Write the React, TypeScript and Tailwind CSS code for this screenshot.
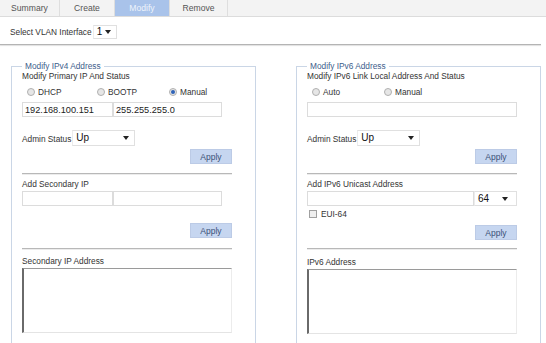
import type { ReactNode } from 'react';

const tabs = [
	{ label: 'Summary', w: 'w-[60px]', active: false },
	{ label: 'Create', w: 'w-[55px]', active: false },
	{ label: 'Modify', w: 'w-[55px]', active: true },
	{ label: 'Remove', w: 'w-[58px]', active: false },
];

function Arrow() {
	return (
		<svg width="6" height="4" viewBox="0 0 6 4" className="shrink-0">
			<polygon points="0,0 6,0 3,4" fill="#222" />
		</svg>
	);
}

function Select({ value, className }: { value: string; className: string }) {
	return (
		<div
			className={`flex items-center justify-between border border-[#e0e0e0] border-l-[#ececec] bg-white pl-[3px] pr-[5px] text-[10px] leading-none text-[#111] ${className}`}
		>
			<span>{value}</span>
			<Arrow />
		</div>
	);
}

function Radio({ label, checked, className }: { label: string; checked?: boolean; className: string }) {
	return (
		<div className={`flex items-center gap-[3px] ${className}`}>
			<span className="flex h-[8px] w-[8px] items-center justify-center rounded-full border border-[#b0b0b0] bg-[#e6e6e6]">
				{checked && <span className="h-[4px] w-[4px] rounded-full bg-[#2f63b8]" />}
			</span>
			<span>{label}</span>
		</div>
	);
}

function Input({ value, className }: { value?: string; className: string }) {
	return (
		<div
			className={`flex h-[15px] items-center border border-[#dcdcdc] bg-white px-[2px] text-[9.2px] text-[#222] ${className}`}
		>
			{value}
		</div>
	);
}

function Apply({ className = '' }: { className?: string }) {
	return (
		<div
			className={`flex h-[15px] w-[42px] items-center justify-center self-end border border-[#bccbe6] bg-[#c6d6f0] text-[8.5px] text-[#3a5077] ${className}`}
		>
			Apply
		</div>
	);
}

function Divider({ className }: { className: string }) {
	return <div className={`h-px bg-[#b8b8b8] shadow-[0_1px_0_#ececec] ${className}`} />;
}

function ListBox({ className }: { className: string }) {
	return (
		<div
			className={`h-[65px] border-t border-l-2 border-r border-b border-t-[#9a9a9a] border-l-[#6a6a6a] border-r-[#ececec] border-b-[#e4e4e4] bg-white ${className}`}
		/>
	);
}

function Panel({ legend, children }: { legend: string; children: ReactNode }) {
	return (
		<fieldset className="h-[300px] w-[245px] shrink-0 border border-[#cad6e6] pl-[10px]">
			<legend className="px-[3px] leading-[10px] text-[#40608c]">{legend}</legend>
			<div className="flex w-[210px] flex-col">{children}</div>
		</fieldset>
	);
}

export default function App() {
	return (
		<div
			className="h-[343px] w-[546px] overflow-hidden bg-white text-[8.3px] leading-[10px] text-[#333]"
			style={{ fontFamily: '"Liberation Sans", Arial, sans-serif' }}
		>
			<div className="flex h-[17px] border-b border-[#dcdcdc] bg-[#f3f3f3]">
				{tabs.map(t => (
					<div
						key={t.label}
						className={`flex items-center justify-center border-r border-[#dedede] text-[8.6px] ${t.w} ${
							t.active ? 'bg-[#a9c3ea] text-[#eef3fb]' : 'text-[#555]'
						}`}
					>
						{t.label}
					</div>
				))}
			</div>

			<div className="flex h-[27px] items-center pl-[10px] pt-[2px]">
				<span>Select VLAN Interface</span>
				<Select value="1" className="ml-[1px] h-[14px] w-[24px]" />
			</div>
			<div className="mr-[5px] h-px bg-[#b4b4b4] shadow-[0_1px_1px_#dcdcdc]" />

			<div className="mt-[16px] flex gap-[40px] pl-[11px]">
				<Panel legend="Modify IPv4 Address">
					<div>Modify Primary IP And Status</div>
					<div className="mt-[5px] flex h-[12px] items-center pl-[5px]">
						<Radio label="DHCP" className="w-[70px]" />
						<Radio label="BOOTP" className="w-[72px]" />
						<Radio label="Manual" checked className="" />
					</div>
					<div className="mt-[4px] flex">
						<Input value="192.168.100.151" className="w-[91px]" />
						<Input value="255.255.255.0" className="w-[109px]" />
					</div>
					<div className="mt-[13px] flex items-center">
						<span className="mt-[2px]">Admin Status</span>
						<Select value="Up" className="ml-[1px] h-[16px] w-[63px]" />
					</div>
					<Apply className="mt-[3px]" />
					<Divider className="mt-[9px]" />
					<div className="mt-[5px]">Add Secondary IP</div>
					<div className="mt-[2px] flex">
						<Input className="w-[91px]" />
						<Input className="w-[109px]" />
					</div>
					<Apply className="mt-[17px]" />
					<Divider className="mt-[10px]" />
					<div className="mt-[7px]">Secondary IP Address</div>
					<ListBox className="mt-[2px]" />
				</Panel>

				<Panel legend="Modify IPv6 Address">
					<div>Modify IPv6 Link Local Address And Status</div>
					<div className="mt-[5px] flex h-[12px] items-center pl-[5px]">
						<Radio label="Auto" className="w-[72px]" />
						<Radio label="Manual" className="" />
					</div>
					<Input className="mt-[4px] w-[210px]" />
					<div className="mt-[13px] flex items-center">
						<span className="mt-[2px]">Admin Status</span>
						<Select value="Up" className="ml-[1px] h-[16px] w-[63px]" />
					</div>
					<Apply className="mt-[3px]" />
					<Divider className="mt-[9px]" />
					<div className="mt-[5px]">Add IPv6 Unicast Address</div>
					<div className="mt-[2px] flex">
						<Input className="w-[167px]" />
						<Select value="64" className="h-[15px] w-[43px] pr-[8px] text-[9px]" />
					</div>
					<div className="mt-[3px] flex h-[10px] items-center gap-[4px] pl-[2px]">
						<span className="h-[8px] w-[8px] border border-[#a0a0a0] bg-[#efefef]" />
						<span>EUI-64</span>
					</div>
					<Apply className="mt-[6px]" />
					<Divider className="mt-[8px]" />
					<div className="mt-[8px]">IPv6 Address</div>
					<ListBox className="mt-[2px]" />
				</Panel>
			</div>
		</div>
	);
}
